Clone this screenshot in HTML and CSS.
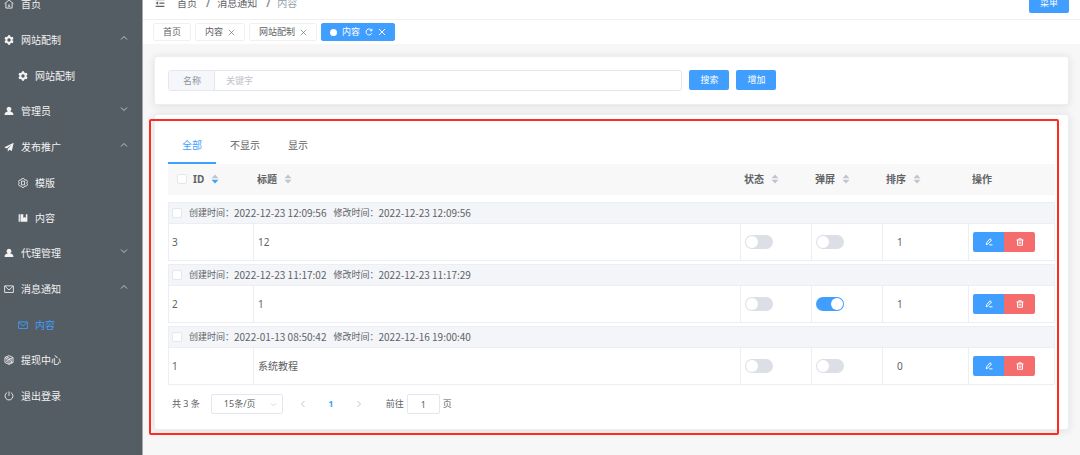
FILE: index.html
```html
<!DOCTYPE html>
<html lang="zh-CN">
<head>
<meta charset="utf-8">
<meta name="viewport" content="width=device-width, initial-scale=1">
<title>消息通知 - 内容</title>
<link rel="stylesheet" href="styles.css">
</head>
<body>
<svg class="sprite" aria-hidden="true">
  <symbol id="home" viewBox="0 0 16 16"><path d="M1 7.500 8 1.500l7 6M3 6.500V14.500h10V6.500M6 11.500h4M8 8.500v3"/></symbol>
  <symbol id="gear" viewBox="0 0 16 16"><circle cx="8" cy="8" r="4.300" stroke-width="3.200"/><path d="M8 .5v3M8 12.500v3M1.500 4.250l2.600 1.500M11.900 10.250l2.600 1.500M1.500 11.750l2.600-1.500M11.900 5.750l2.600-1.500" stroke-width="3.400"/></symbol>
  <symbol id="user" viewBox="0 0 16 16"><path class="solid" d="M8 1a3.900 3.900 0 0 1 2.300 7v.8c2.700.6 4.700 2 4.700 4.200v1.500H1V13c0-2.200 2-3.600 4.700-4.200V8A3.900 3.900 0 0 1 8 1z"/></symbol>
  <symbol id="plane" viewBox="0 0 16 16"><path class="solid" d="M15.500 1 .5 8.500l4 1.800L12 4.500 6 11v4.500l2.500-3 4 1.800z"/></symbol>
  <symbol id="nut" viewBox="0 0 16 16"><path d="M5 2 6.500 1h3L11 3l3 .5L15.300 6l-1.500 2 1.500 2-1.300 2.500-3 .5-1.500 2h-3L5 13l-3-.5L.7 10l1.500-2L.7 6 2 3.500 5 3z"/><path d="M5.500 5h5v6h-5z"/></symbol>
  <symbol id="book" viewBox="0 0 16 16"><path class="solid" d="M1 2h2v12H1zM4 2h4.500v6l2-1.500 2 1.500V2H15v12H4z"/></symbol>
  <symbol id="mail" viewBox="0 0 16 16"><path d="M1 3h14v10.500H1zM1.500 3.500 4 6l4 3.500L12 6l2.500-2.500"/></symbol>
  <symbol id="box" viewBox="0 0 16 16"><path d="M8 1l6.500 3v8L8 15l-6.500-3V4zM1.500 4 8 7.500 14.500 4M8 7.500V15M4 2.800l7 3.500M3.500 7.500l3 1.500M3.500 10l3 1.500M10 9l3-1.500M10 11.500l3-1.500M10 13l3-1.500"/></symbol>
  <symbol id="power" viewBox="0 0 16 16"><path d="M5 2.500a6.300 6.300 0 1 0 6 0M8 .8v7"/></symbol>
  <symbol id="up" viewBox="0 0 16 16"><path d="m2 11 6-6 6 6"/></symbol>
  <symbol id="down" viewBox="0 0 16 16"><path d="m2 5 6 6 6-6"/></symbol>
  <symbol id="left" viewBox="0 0 16 16"><path d="M11 2 5 8l6 6"/></symbol>
  <symbol id="right" viewBox="0 0 16 16"><path d="m5 2 6 6-6 6"/></symbol>
  <symbol id="close" viewBox="0 0 16 16"><path d="m2 2 12 12M14 2 2 14"/></symbol>
  <symbol id="refresh" viewBox="0 0 16 16"><path d="M13.500 10.500A6 6 0 1 1 13 4.500M13.800 1.500v4h-4"/></symbol>
  <symbol id="fold" viewBox="0 0 16 16"><path d="M1 2.500h14M7 8h8M1 13.500h14" stroke-width="2"/><path class="solid" d="M5 5v6L1 8z"/></symbol>
  <symbol id="edit" viewBox="0 0 16 16"><path d="M2.500 13.500 3.500 9l6.500-7.500 3 2.500-6.500 7.500zM8.500 13.700H15"/></symbol>
  <symbol id="trash" viewBox="0 0 16 16"><path d="M1 4h14M5.500 4V1.500h5V4M3 4v10.500h10V4M6.300 7v4.500M9.700 7v4.500"/></symbol>
  <symbol id="sort" viewBox="0 0 16 18"><path class="asc" d="m8 0 7 7.500H1z"/><path class="desc" d="m8 18 7-7.500H1z"/></symbol>
</svg>

<div class="app">
  <nav class="sidebar" aria-label="主菜单">
    <ul class="menu">
      <li><a class="menu-item" href="#"><svg class="icon"><use href="#home"/></svg>首页</a></li>
      <li>
        <button class="menu-item" type="button" aria-expanded="true"><svg class="icon"><use href="#gear"/></svg>网站配制<svg class="arrow"><use href="#up"/></svg></button>
        <ul class="submenu"><li><a class="menu-item" href="#"><svg class="icon"><use href="#gear"/></svg>网站配制</a></li></ul>
      </li>
      <li><button class="menu-item" type="button" aria-expanded="false"><svg class="icon"><use href="#user"/></svg>管理员<svg class="arrow"><use href="#down"/></svg></button></li>
      <li>
        <button class="menu-item" type="button" aria-expanded="true"><svg class="icon"><use href="#plane"/></svg>发布推广<svg class="arrow"><use href="#up"/></svg></button>
        <ul class="submenu">
          <li><a class="menu-item" href="#"><svg class="icon"><use href="#nut"/></svg>模版</a></li>
          <li><a class="menu-item" href="#"><svg class="icon"><use href="#book"/></svg>内容</a></li>
        </ul>
      </li>
      <li><button class="menu-item" type="button" aria-expanded="false"><svg class="icon"><use href="#user"/></svg>代理管理<svg class="arrow"><use href="#down"/></svg></button></li>
      <li>
        <button class="menu-item" type="button" aria-expanded="true"><svg class="icon"><use href="#mail"/></svg>消息通知<svg class="arrow"><use href="#up"/></svg></button>
        <ul class="submenu"><li><a class="menu-item current" href="#" aria-current="page"><svg class="icon"><use href="#mail"/></svg>内容</a></li></ul>
      </li>
      <li><a class="menu-item" href="#"><svg class="icon"><use href="#box"/></svg>提现中心</a></li>
      <li><a class="menu-item" href="#"><svg class="icon"><use href="#power"/></svg>退出登录</a></li>
    </ul>
  </nav>

  <div class="main">
    <header class="topbar">
      <button class="fold" type="button" aria-label="折叠菜单"><svg class="icon"><use href="#fold"/></svg></button>
      <nav class="crumbs" aria-label="面包屑"><a href="#">首页</a><span class="slash">/</span><a href="#">消息通知</a><span class="slash">/</span><span class="here">内容</span></nav>
      <button class="btn primary" type="button">菜单</button>
    </header>

    <div class="tags">
      <div class="tag"><a href="#">首页</a></div>
      <div class="tag"><a href="#">内容</a><button type="button" aria-label="关闭内容"><svg><use href="#close"/></svg></button></div>
      <div class="tag"><a href="#">网站配制</a><button type="button" aria-label="关闭网站配制"><svg><use href="#close"/></svg></button></div>
      <div class="tag active"><span class="dot"></span><a href="#">内容</a><button type="button" aria-label="刷新"><svg><use href="#refresh"/></svg></button><button type="button" aria-label="关闭当前内容"><svg><use href="#close"/></svg></button></div>
    </div>

    <main class="content">
      <form class="card search">
        <div class="field">
          <label for="keyword">名称</label>
          <input id="keyword" type="text" placeholder="关键字">
        </div>
        <button class="btn primary" type="button">搜索</button>
        <button class="btn primary" type="button">增加</button>
      </form>

      <section class="card listing">
        <div class="tabs" role="tablist">
          <button class="tab selected" type="button" role="tab" aria-selected="true">全部</button>
          <button class="tab" type="button" role="tab" aria-selected="false">不显示</button>
          <button class="tab" type="button" role="tab" aria-selected="false">显示</button>
        </div>

        <table class="grid">
          <colgroup><col class="c-id"><col><col class="c-switch"><col class="c-switch"><col class="c-sort"><col class="c-ops"></colgroup>
          <thead>
            <tr>
              <th class="first"><span class="head"><input type="checkbox" aria-label="全选">ID<svg class="sort down"><use href="#sort"/></svg></span></th>
              <th><span class="head">标题<svg class="sort"><use href="#sort"/></svg></span></th>
              <th><span class="head">状态<svg class="sort"><use href="#sort"/></svg></span></th>
              <th><span class="head">弹屏<svg class="sort"><use href="#sort"/></svg></span></th>
              <th><span class="head">排序<svg class="sort"><use href="#sort"/></svg></span></th>
              <th><span class="head">操作</span></th>
            </tr>
          </thead>
          <tbody>
            <tr class="meta"><td colspan="6"><div class="stamp"><input type="checkbox" aria-label="选择 3"><span>创建时间：</span><time>2022-12-23 12:09:56</time><span class="second">修改时间：</span><time>2022-12-23 12:09:56</time></div></td></tr>
            <tr class="row"><td>3</td><td>12</td>
              <td><input class="switch" type="checkbox" role="switch" aria-label="状态 3"></td>
              <td><input class="switch" type="checkbox" role="switch" aria-label="弹屏 3"></td>
              <td class="order">1</td>
              <td><div class="ops"><button class="btn primary" type="button" aria-label="编辑 3"><svg><use href="#edit"/></svg></button><button class="btn danger" type="button" aria-label="删除 3"><svg><use href="#trash"/></svg></button></div></td></tr>
          </tbody>
          <tbody>
            <tr class="meta"><td colspan="6"><div class="stamp"><input type="checkbox" aria-label="选择 2"><span>创建时间：</span><time>2022-12-23 11:17:02</time><span class="second">修改时间：</span><time>2022-12-23 11:17:29</time></div></td></tr>
            <tr class="row"><td>2</td><td>1</td>
              <td><input class="switch" type="checkbox" role="switch" aria-label="状态 2"></td>
              <td><input class="switch" type="checkbox" role="switch" aria-label="弹屏 2" checked></td>
              <td class="order">1</td>
              <td><div class="ops"><button class="btn primary" type="button" aria-label="编辑 2"><svg><use href="#edit"/></svg></button><button class="btn danger" type="button" aria-label="删除 2"><svg><use href="#trash"/></svg></button></div></td></tr>
          </tbody>
          <tbody>
            <tr class="meta"><td colspan="6"><div class="stamp"><input type="checkbox" aria-label="选择 1"><span>创建时间：</span><time>2022-01-13 08:50:42</time><span class="second">修改时间：</span><time>2022-12-16 19:00:40</time></div></td></tr>
            <tr class="row"><td>1</td><td>系统教程</td>
              <td><input class="switch" type="checkbox" role="switch" aria-label="状态 1"></td>
              <td><input class="switch" type="checkbox" role="switch" aria-label="弹屏 1"></td>
              <td class="order">0</td>
              <td><div class="ops"><button class="btn primary" type="button" aria-label="编辑 1"><svg><use href="#edit"/></svg></button><button class="btn danger" type="button" aria-label="删除 1"><svg><use href="#trash"/></svg></button></div></td></tr>
          </tbody>
        </table>

        <div class="pager">
          <span class="total">共 3 条</span>
          <div class="size"><select aria-label="每页条数"><option>15条/页</option></select><svg><use href="#down"/></svg></div>
          <button class="step" type="button" aria-label="上一页" disabled><svg><use href="#left"/></svg></button>
          <button class="step page" type="button" aria-current="page">1</button>
          <button class="step" type="button" aria-label="下一页" disabled><svg><use href="#right"/></svg></button>
          <label class="jump">前往<input type="text" value="1" inputmode="numeric">页</label>
        </div>
        <div class="marker" aria-hidden="true"></div>
      </section>
    </main>
  </div>
</div>
</body>
</html>
```

FILE: styles.css
```css
:root {
  --blue: #409eff;
  --red: #f56c6c;
  --text: #606266;
  --line: #ebeef5;
  --field: #dcdfe6;
  --outline: #e4e7ed;
}

* { box-sizing: border-box; }

body {
  margin: 0;
  overflow-x: hidden;
  background: #f7f7f7;
  color: var(--text);
  font: 10px/14px "Noto Sans", "Noto Sans CJK SC", sans-serif;
}

button, input, select { font: inherit; color: inherit; margin: 0; }
button { padding: 0; border: 0; background: none; cursor: pointer; }
a { color: inherit; text-decoration: none; }
ul { list-style: none; margin: 0; padding: 0; }
svg { fill: none; stroke: currentColor; stroke-width: 1.4; flex: none; }
.solid { fill: currentColor; stroke: none; }
.sprite { display: none; }
.icon { width: 10px; height: 10px; }

/* The top edge of the shell is scrolled out of view */
.app {
  display: flex;
  min-height: calc(100vh + 14px);
  margin-top: -14px;
}

/* Sidebar */
.sidebar {
  flex: none;
  width: 143px;
  background: #545c64;
  border-right: 1px solid #a5a9ad;
  color: #f2f2f2;
}
.menu-item {
  display: flex;
  align-items: center;
  gap: 7px;
  width: 100%;
  height: 36px;
  padding: 0 14px 0 4px;
  text-align: left;
}
.submenu .menu-item { height: 35px; padding-left: 18px; }
.menu-item.current { color: var(--blue); }
.arrow { width: 8px; height: 8px; margin: 0 0 4px auto; }

/* Header */
.main { flex: 1; min-width: 0; }
.topbar {
  display: flex;
  align-items: center;
  height: 34px;
  padding: 0 11px 0 12px;
  background: #fff;
  border-bottom: 1px solid #f0f0f0;
}
.topbar .btn { margin-left: auto; }
.fold { display: flex; }
.fold svg { stroke-width: 2; }
.crumbs { display: flex; margin-left: 12px; }
.slash { margin: 0 7px 0 9px; font-weight: 700; color: #8c8f96; }
.here { color: #97a0a8; }

.btn {
  display: flex;
  align-items: center;
  justify-content: center;
  width: 40px;
  height: 20px;
  border-radius: 2px;
  color: #fff;
  font-size: 9px;
}
.primary { background: var(--blue); }
.danger { background: var(--red); }

/* Open page tags */
.tags {
  display: flex;
  gap: 4px;
  padding: 3px 10px;
  background: #fff;
  font-size: 9px;
}
.tag {
  display: flex;
  align-items: center;
  gap: 5px;
  height: 18px;
  padding: 0 9px;
  border: 1px solid #f0f0f0;
  border-radius: 2px;
}
.tag button { display: flex; }
.tag svg { width: 7px; height: 7px; }
.tag.active { padding: 0 8px; background: var(--blue); border-color: var(--blue); color: #fff; }
.tag.active svg { width: 8px; height: 8px; stroke-width: 2; }
.dot { width: 7px; height: 7px; border-radius: 50%; background: #fff; }

/* Cards */
.content { display: grid; gap: 9px; padding: 12px 11px; }
.card {
  background: #fff;
  border: 1px solid var(--line);
  border-radius: 3px;
  box-shadow: 0 1px 9px rgba(0, 0, 0, 0.1);
}
.search { display: flex; gap: 7px; padding: 13px; }
.field {
  display: flex;
  flex: 0 1 58%;
  height: 21px;
  border: 1px solid var(--outline);
  border-radius: 3px;
  overflow: hidden;
  font-size: 9px;
}
.field label {
  flex: none;
  padding: 3px 13px 3px 14px;
  background: #f5f7fa;
  border-right: 1px solid var(--outline);
  color: #909399;
}
.field input { flex: 1; min-width: 0; padding: 0 11px; border: 0; background: none; outline: none; }
.field input::placeholder { color: #c0c4cc; }

/* List */
.listing { position: relative; padding: 13px 13px 15px; }
.tabs { display: flex; }
.tab { height: 36px; padding: 0 14px; border-bottom: 2px solid transparent; }
.tab.selected { color: var(--blue); border-color: var(--blue); }

.grid { width: 100%; table-layout: fixed; border-collapse: separate; border-spacing: 0; }
.c-id { width: 85px; }
.c-switch { width: 71px; }
.c-sort { width: 86px; }
.c-ops { width: 87px; }
.grid th { height: 31px; padding: 0 4px 2px; background: #f8f8f8; text-align: left; font-weight: 700; }
.grid th.first { padding-left: 9px; }
.head { display: flex; align-items: center; }
.head input { margin-right: 6px; }
.sort { width: 8px; height: 10px; margin-left: 7px; fill: #c0c4cc; stroke: none; }
.asc { fill: #c0c4cc; }
.desc { fill: inherit; }
.sort.down { fill: var(--blue); }

.grid tbody::before { content: ""; display: block; height: 3px; }
.grid thead + tbody::before { height: 7px; }
.grid td { padding: 0 4px; border-left: 1px solid var(--line); border-bottom: 1px solid var(--line); }
.grid td:last-child { border-right: 1px solid var(--line); }
.meta td { height: 22px; padding: 0 3px; background: #f3f5f8; border-top: 1px solid var(--line); }
.row td { height: 37px; }
.row td:first-child { padding-left: 3px; }
.grid .order { padding-left: 14px; }
.stamp { display: flex; align-items: center; }
.stamp input { margin-right: 7px; }
.stamp span { font-size: 9px; }
.stamp time { font-family: "Noto Sans CJK SC", sans-serif; }
.stamp .second { margin-left: 7px; }

input[type="checkbox"] {
  appearance: none;
  display: block;
  width: 10px;
  height: 10px;
  background: #fff;
  border: 1px solid var(--outline);
  border-radius: 2px;
}
input[type="checkbox"].switch {
  width: 28px;
  height: 14px;
  padding: 1px;
  background: var(--field);
  border: 0;
  border-radius: 7px;
}
.switch::before { content: ""; display: block; width: 12px; height: 12px; border-radius: 50%; background: #fff; }
input[type="checkbox"].switch:checked { background: var(--blue); }
.switch:checked::before { margin-left: auto; }

.ops { display: flex; }
.ops .btn { width: 31px; }
.ops .primary { border-radius: 2px 0 0 2px; }
.ops .danger { border-radius: 0 2px 2px 0; }
.ops svg { width: 8px; height: 8px; stroke-width: 2; }

/* Pagination */
.pager { display: flex; align-items: center; margin-top: 9px; padding-left: 4px; font-size: 9px; }
.size { display: flex; align-items: center; width: 72px; height: 20px; margin: 0 10px 0 11px; position: relative; }
.size select { appearance: none; width: 100%; height: 20px; padding: 0 12px; border: 1px solid var(--outline); border-radius: 2px; background: #fff; }
.size svg { position: absolute; right: 6px; width: 7px; height: 7px; color: #c0c4cc; pointer-events: none; }
.step { display: flex; align-items: center; justify-content: center; width: 20px; height: 20px; margin-right: 8px; }
.step svg { width: 8px; height: 8px; color: #a8abb2; }
.step.page { color: var(--blue); font-weight: 700; }
.jump { display: flex; align-items: center; gap: 3px; margin-left: 9px; }
.jump input { width: 33px; height: 20px; padding: 0; border: 1px solid var(--outline); border-radius: 2px; text-align: center; }

/* Highlight frame drawn over the list */
.marker {
  position: absolute;
  inset: 4px 9px -6px -6px;
  border: 2px solid #ff2a20;
  border-radius: 2px;
  pointer-events: none;
}
```
